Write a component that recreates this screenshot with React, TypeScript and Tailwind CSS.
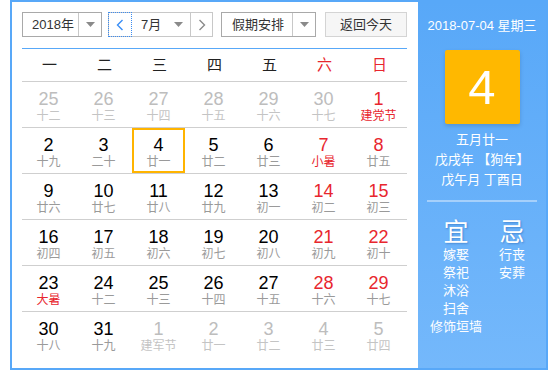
import React from "react";

type Cell = { d: number; l: string; other?: boolean; red?: boolean; redL?: boolean; sel?: boolean };

const rows: Cell[][] = [
  [
    { d: 25, l: "十二", other: true },
    { d: 26, l: "十三", other: true },
    { d: 27, l: "十四", other: true },
    { d: 28, l: "十五", other: true },
    { d: 29, l: "十六", other: true },
    { d: 30, l: "十七", other: true },
    { d: 1, l: "建党节", red: true, redL: true },
  ],
  [
    { d: 2, l: "十九" },
    { d: 3, l: "二十" },
    { d: 4, l: "廿一", sel: true },
    { d: 5, l: "廿二" },
    { d: 6, l: "廿三" },
    { d: 7, l: "小暑", red: true, redL: true },
    { d: 8, l: "廿五", red: true },
  ],
  [
    { d: 9, l: "廿六" },
    { d: 10, l: "廿七" },
    { d: 11, l: "廿八" },
    { d: 12, l: "廿九" },
    { d: 13, l: "初一" },
    { d: 14, l: "初二", red: true },
    { d: 15, l: "初三", red: true },
  ],
  [
    { d: 16, l: "初四" },
    { d: 17, l: "初五" },
    { d: 18, l: "初六" },
    { d: 19, l: "初七" },
    { d: 20, l: "初八" },
    { d: 21, l: "初九", red: true },
    { d: 22, l: "初十", red: true },
  ],
  [
    { d: 23, l: "大暑", redL: true },
    { d: 24, l: "十二" },
    { d: 25, l: "十三" },
    { d: 26, l: "十四" },
    { d: 27, l: "十五" },
    { d: 28, l: "十六", red: true },
    { d: 29, l: "十七", red: true },
  ],
  [
    { d: 30, l: "十八" },
    { d: 31, l: "十九" },
    { d: 1, l: "建军节", other: true },
    { d: 2, l: "廿一", other: true },
    { d: 3, l: "廿二", other: true },
    { d: 4, l: "廿三", other: true },
    { d: 5, l: "廿四", other: true },
  ],
];

const weekdays = ["一", "二", "三", "四", "五", "六", "日"];

function Caret() {
  return (
    <svg width="9" height="5" viewBox="0 0 9 5">
      <path d="M0 0 L9 0 L4.5 5 Z" fill="#8a8a8a" />
    </svg>
  );
}

export default function App() {
  return (
    <div
      className="w-[558px] h-[376px] bg-white"
      style={{ fontFamily: '"Liberation Sans", "Noto Sans CJK SC", sans-serif' }}
    >
      <div className="ml-[10px] w-[538px] h-[370px] border-2 border-[#58a8f8] flex">
        {/* Left calendar */}
        <div className="w-[406px] h-full bg-white pl-[10px] pr-[11px] pt-[10px] flex flex-col">
          {/* toolbar */}
          <div className="flex items-center h-[25px] text-[13px] text-[#333]">
            <div className="w-[80px] h-[25px] border border-[#a9a9a9] flex items-stretch">
              <div className="w-[55px] flex items-center pl-[9px]">2018年</div>
              <div className="flex-1 border-l border-[#c8c8c8] flex items-center justify-center">
                <Caret />
              </div>
            </div>
            <div className="ml-[6px] w-[105px] h-[25px] border border-[#c8c8c8] flex items-stretch">
              <div className="w-[24px] -my-px -ml-px h-[25px] border border-dotted border-[#3c8cf0] flex items-center justify-center">
                <svg width="8" height="12" viewBox="0 0 8 12">
                  <path d="M6.5 1 L1.5 6 L6.5 11" stroke="#3a8ef5" strokeWidth="1.4" fill="none" />
                </svg>
              </div>
              <div className="w-[58px] flex items-center justify-between pl-[9px] pr-[7px]">
                <span>7月</span>
                <Caret />
              </div>
              <div className="flex-1 border-l border-[#c8c8c8] flex items-center justify-center">
                <svg width="8" height="12" viewBox="0 0 8 12">
                  <path d="M1.5 1 L6.5 6 L1.5 11" stroke="#8a8a8a" strokeWidth="1.4" fill="none" />
                </svg>
              </div>
            </div>
            <div className="ml-[8px] w-[95px] h-[25px] border border-[#a9a9a9] flex items-stretch">
              <div className="w-[70px] flex items-center pl-[10px]">假期安排</div>
              <div className="flex-1 border-l border-[#c8c8c8] flex items-center justify-center">
                <Caret />
              </div>
            </div>
            <div className="ml-[9px] w-[82px] h-[25px] border border-[#d4d4d4] bg-[#f6f6f6] flex items-center justify-center">
              返回今天
            </div>
          </div>
          <div className="mt-[11px] h-px bg-[#58a8f8]" />
          {/* week header */}
          <div className="grid grid-cols-7 h-[33px] border-b border-[#cfcfcf] items-center text-[15px]">
            {weekdays.map((w, i) => (
              <div key={w} className={`text-center ${i >= 5 ? "text-[#e8262e]" : "text-[#222]"}`}>
                {w}
              </div>
            ))}
          </div>
          {rows.map((r, ri) => (
            <div
              key={ri}
              className={`grid grid-cols-7 h-[46px] ${ri < 5 ? "border-b border-[#cfcfcf]" : ""}`}
            >
              {r.map((c, ci) => (
                <div key={ci} className="flex justify-start">
                  <div
                    className={`w-[53px] h-[45px] flex flex-col items-center ${
                      c.sel ? "border-2 border-[#ffb400] pt-[5px]" : "pt-[7px]"
                    }`}
                  >
                    <div
                      className={`text-[18px] leading-[20px] ${
                        c.other ? "text-[#bdbdbd]" : c.red ? "text-[#e8262e]" : "text-black"
                      }`}
                    >
                      {c.d}
                    </div>
                    <div
                      className={`text-[12px] leading-[14px] whitespace-nowrap ${
                        c.other ? "text-[#c4c4c4]" : c.redL ? "text-[#e8262e]" : "text-[#9a9a9a]"
                      }`}
                    >
                      {c.l}
                    </div>
                  </div>
                </div>
              ))}
            </div>
          ))}
        </div>
        {/* Right panel */}
        <div className="flex-1 h-full bg-gradient-to-b from-[#58a8f8] to-[#74b8fb] flex flex-col items-center text-white">
          <div className="mt-[15px] text-[13px] leading-[18px]">2018-07-04 星期三</div>
          <div className="mt-[15px] w-[75px] h-[74px] bg-[#ffb800] rounded-[2px] shadow-[0_2px_4px_rgba(0,0,0,0.15)] flex items-center justify-center text-[49px] leading-none">
            4
          </div>
          <div className="mt-[6px] text-[13px] leading-[20px] text-center">
            <div>五月廿一</div>
            <div>戊戌年 【狗年】</div>
            <div>戊午月 丁酉日</div>
          </div>
          <div className="mt-[10px] w-[110px] h-[2px] bg-[#a6d0fb]" />
          <div className="mt-[16px] flex w-[112px] ml-[4px]">
            <div className="w-[56px] flex flex-col items-center">
              <div className="text-[25px] leading-[28px] [text-shadow:1px_1px_2px_rgba(0,60,140,0.35)]">宜</div>
              <div className="text-[13px] leading-[18px] text-center whitespace-nowrap">
                <div>嫁娶</div>
                <div>祭祀</div>
                <div>沐浴</div>
                <div>扫舍</div>
                <div>修饰垣墙</div>
              </div>
            </div>
            <div className="w-[56px] flex flex-col items-center">
              <div className="text-[25px] leading-[28px] [text-shadow:1px_1px_2px_rgba(0,60,140,0.35)]">忌</div>
              <div className="text-[13px] leading-[18px] text-center">
                <div>行丧</div>
                <div>安葬</div>
              </div>
            </div>
          </div>
        </div>
      </div>
    </div>
  );
}
